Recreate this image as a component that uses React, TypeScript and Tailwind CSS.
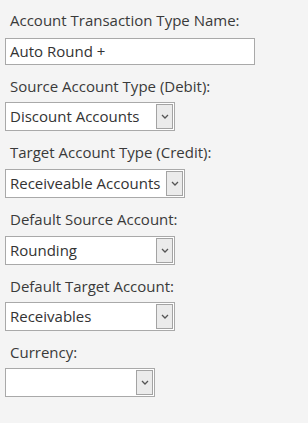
import React from "react";

const font = { fontFamily: '"Open Sans", "Noto Sans", sans-serif' };

function Chevron() {
  return (
    <svg width="8" height="5" viewBox="0 0 8 5" className="block">
      <path d="M1 1 L4 4 L7 1" fill="none" stroke="#555" strokeWidth="1.3" />
    </svg>
  );
}

function Select({ value, w }: { value: string; w: string }) {
  return (
    <div className={`${w} h-[29px] bg-white border border-[#a9a9a9] flex items-center justify-between p-px`}>
      <span className="pl-[3px] text-[15px] text-[#333] leading-none whitespace-nowrap">{value}</span>
      <div className="w-[17px] h-full bg-[#ebebeb] border border-[#a3a3a3] flex items-center justify-center shrink-0">
        <Chevron />
      </div>
    </div>
  );
}

function Label({ children }: { children: React.ReactNode }) {
  return <div className="pl-[10px] text-[15px] leading-[20px] text-[#3a3a3a]">{children}</div>;
}

export default function App() {
  return (
    <div className="w-[308px] h-[423px] bg-[#f4f4f4] pl-[5px] pt-[10px]" style={font}>
      <div className="-ml-[5px]"><Label>Account Transaction Type Name:</Label></div>
      <div className="mt-[8px] w-[250px] h-[27px] bg-white border border-[#a9a9a9] flex items-center pl-[4px] text-[15px] text-[#333]">
        Auto Round +
      </div>
      <div className="mt-[11px] -ml-[5px]"><Label>Source Account Type (Debit):</Label></div>
      <div className="mt-[6px]"><Select value="Discount Accounts" w="w-[170px]" /></div>
      <div className="mt-[11px] -ml-[5px]"><Label>Target Account Type (Credit):</Label></div>
      <div className="mt-[7px]"><Select value="Receiveable Accounts" w="w-[180px]" /></div>
      <div className="mt-[11px] -ml-[5px]"><Label>Default Source Account:</Label></div>
      <div className="mt-[7px]"><Select value="Rounding" w="w-[170px]" /></div>
      <div className="mt-[11px] -ml-[5px]"><Label>Default Target Account:</Label></div>
      <div className="mt-[6px]"><Select value="Receivables" w="w-[170px]" /></div>
      <div className="mt-[11px] -ml-[5px]"><Label>Currency:</Label></div>
      <div className="mt-[6px]"><Select value="" w="w-[150px]" /></div>
    </div>
  );
}
